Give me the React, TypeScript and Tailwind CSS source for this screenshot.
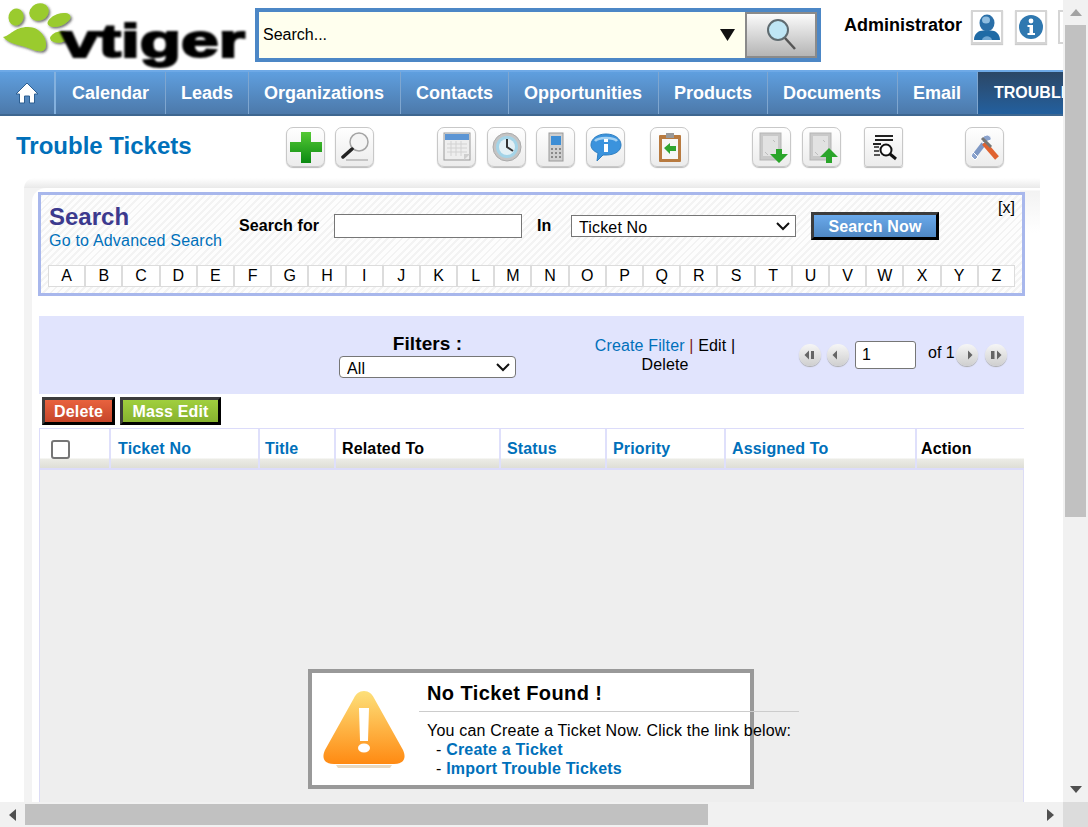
import type { ReactNode } from 'react';

const navItems = [
  { label: 'Calendar', width: 'w-[110px] pl-[16px]' },
  { label: 'Leads', width: 'w-[83px] pl-[15px]' },
  { label: 'Organizations', width: 'w-[152px] pl-[15px]' },
  { label: 'Contacts', width: 'w-[108px] pl-[15px]' },
  { label: 'Opportunities', width: 'w-[150px] pl-[15px]' },
  { label: 'Products', width: 'w-[109px] pl-[15px]' },
  { label: 'Documents', width: 'w-[130px] pl-[15px]' },
  { label: 'Email', width: 'w-[80px] pl-[15px]' },
];

const columns = [
  { label: '', width: 'w-[71px] pl-[6px]', link: false },
  { label: 'Ticket No', width: 'w-[149px] pl-[7px]', link: true },
  { label: 'Title', width: 'w-[76px] pl-[5px]', link: true },
  { label: 'Related To', width: 'w-[165px] pl-[6px]', link: false },
  { label: 'Status', width: 'w-[106px] pl-[6px]', link: true },
  { label: 'Priority', width: 'w-[119px] pl-[6px]', link: true },
  { label: 'Assigned To', width: 'w-[191px] pl-[6px]', link: true },
  { label: 'Action', width: 'w-[107px] pl-[4px]', link: false },
];

const letters = 'ABCDEFGHIJKLMNOPQRSTUVWXYZ'.split('');

function Logo() {
  return (
    <svg width="250" height="70" viewBox="0 0 250 70">
      <defs>
        <filter id="soft">
          <feGaussianBlur stdDeviation="0.8" />
        </filter>
        <filter id="paw" x="-20%" y="-20%" width="150%" height="150%">
          <feDropShadow dx="1.5" dy="1.5" stdDeviation="1" floodColor="#333" floodOpacity="0.7" />
        </filter>
      </defs>
      <g filter="url(#paw)" fill="#9acb2f">
        <ellipse cx="16" cy="17" rx="7.5" ry="8.5" transform="rotate(15 16 17)" />
        <ellipse cx="39" cy="12" rx="10" ry="8.5" transform="rotate(-25 39 12)" />
        <ellipse cx="59" cy="20" rx="12" ry="6" transform="rotate(-20 59 20)" />
        <ellipse cx="60" cy="37" rx="10" ry="5.5" transform="rotate(-10 60 37)" />
        <path d="M3 37 C10 36 14 27 28 27 C40 27 47 38 46 46 C45 53 38 52 31 49 C22 45 10 45 3 37 Z" />
      </g>
      <text x="61" y="57" textLength="184" lengthAdjust="spacingAndGlyphs" fontFamily="'Liberation Sans', sans-serif" fontWeight="700" fontSize="47" fill="#000" stroke="#000" strokeWidth="2" filter="url(#soft)">
        vtiger
      </text>
    </svg>
  );
}

function ToolButton({ children, className = '' }: { children: ReactNode; className?: string }) {
  return (
    <div className={`flex h-[40px] w-[39px] shrink-0 items-center justify-center rounded-[7px] border border-[#c8c8c8] bg-gradient-to-b from-white to-[#ececec] shadow-[0_1px_1px_#bbb] ${className}`}>
      <svg width="34" height="34" viewBox="0 0 34 34" className="blur-[0.35px]">
        {children}
      </svg>
    </div>
  );
}

function DocShape() {
  return (
    <>
      <rect x="5" y="3" width="21" height="27" fill="#c9c9c9" stroke="#b5b5b5" />
      <rect x="8" y="6" width="15" height="20" fill="#e2e2e2" />
      <path d="M10 22 L13 25 M18 10 L20 12" stroke="#bdbdbd" />
    </>
  );
}

function PagerButton({ dir, end }: { dir: 'left' | 'right'; end: boolean }) {
  const arrow = dir === 'left' ? 'M10 6.5 L10 15.5 L5.5 11 Z' : 'M12 6.5 L12 15.5 L16.5 11 Z';
  const stem = dir === 'left' ? 'M12 7 H15 V15 H12 Z' : 'M6 7 H9.5 V15 H6 Z';
  return (
    <div className="h-[22px] w-[22px] shrink-0 rounded-full bg-gradient-to-b from-[#f6f6f6] to-[#cfcfcf] shadow-[0_1px_1px_#aaa]">
      <svg width="22" height="22" viewBox="0 0 22 22">
        <path d={arrow} fill="#666" />
        {end && <path d={stem} fill="#666" />}
      </svg>
    </div>
  );
}

function ActionButton({ label, className }: { label: string; className: string }) {
  return (
    <button className={`h-[28px] border-[3px] border-t-[#3c3c3c] border-l-[#3c3c3c] border-r-black border-b-black text-[16px] font-bold tracking-[0.15px] text-white ${className}`}>
      {label}
    </button>
  );
}

function SelectBox({ value, className }: { value: string; className: string }) {
  return (
    <div className={`relative h-[22px] shrink-0 ${className}`}>
      <select defaultValue={value} className="h-full w-full appearance-none rounded-[inherit] border border-[#767676] bg-white pb-[2px] pl-[7px] tracking-[0.15px]">
        <option>{value}</option>
      </select>
      <svg width="14" height="9" viewBox="0 0 14 9" className="pointer-events-none absolute right-[6px] top-[7px]">
        <path d="M1 1 L7 7 L13 1" fill="none" stroke="#111" strokeWidth="2" />
      </svg>
    </div>
  );
}

export default function App() {
  return (
    <div className="flex h-[827px] w-[1088px] flex-col overflow-hidden bg-white font-['Liberation_Sans',sans-serif] text-[16px] text-black">
      <div className="flex h-[802px]">
        <div className="h-[802px] w-[1063px] overflow-hidden">
          <div className="w-[1200px]">
            {/* header */}
            <div className="flex h-[70px]">
              <div className="w-[255px] shrink-0">
                <Logo />
              </div>
              <div className="mt-[8px] flex h-[54px] w-[566px] shrink-0 border-4 border-[#4c87c6] bg-[#ffffee]">
                <div className="flex flex-1 items-center pl-[4px]">Search...</div>
                <div className="flex w-[25px] items-center">
                  <svg width="15" height="12" viewBox="0 0 15 12">
                    <path d="M0 0 H15 L7.5 12 Z" fill="#111" />
                  </svg>
                </div>
                <div className="flex w-[72px] items-center justify-center border-2 border-[#8a8a8a] bg-gradient-to-b from-[#fbfbfb] to-[#b5b5b5]">
                  <svg width="34" height="38" viewBox="0 0 34 38">
                    <circle cx="14" cy="14" r="10" fill="#bfe6f5" stroke="#5f6b70" strokeWidth="2" />
                    <path d="M21 22 L31 33" stroke="#555" strokeWidth="2.5" />
                  </svg>
                </div>
              </div>
              <div className="ml-[23px] mt-[15px] w-[118px] shrink-0 text-[18px] font-bold leading-[20px]">Administrator</div>
              <div className="ml-[9px] mt-[10px] flex h-[34px] w-[32px] shrink-0 items-center justify-center border-2 border-[#d5d5d5] shadow-[0_1px_1px_#ccc]">
                <svg width="28" height="28" viewBox="0 0 28 28" className="blur-[0.3px]">
                  <path d="M1 27 C1 19 8 16 14 18 C20 16 27 19 27 27 Z" fill="#1f6aa5" />
                  <path d="M9 27 C10 22 18 22 19 27 Z" fill="#6fa6d2" />
                  <ellipse cx="14" cy="10" rx="7.5" ry="8.5" fill="#2a6fa8" />
                  <ellipse cx="13" cy="7" rx="4" ry="3.5" fill="#8fbde0" />
                </svg>
              </div>
              <div className="ml-[12px] mt-[10px] flex h-[34px] w-[32px] shrink-0 items-center justify-center border-2 border-[#d5d5d5] shadow-[0_1px_1px_#ccc]">
                <svg width="26" height="26" viewBox="0 0 26 26" className="blur-[0.3px]">
                  <circle cx="13" cy="13" r="12" fill="#2f78b0" />
                  <circle cx="13" cy="7" r="2.4" fill="#fff" />
                  <path d="M9.5 11 H15 V19 H17 V21 H9.5 V19 H11.5 V13 H9.5 Z" fill="#fff" />
                </svg>
              </div>
              <div className="ml-[11px] mt-[10px] h-[34px] w-[33px] shrink-0 border-2 border-[#d5d5d5]" />
            </div>

            {/* module tabs */}
            <div className="flex h-[46px] border-t-2 border-b-2 border-t-[#6ea9e6] border-b-[#3e6790] bg-gradient-to-b from-[#5f9fdf] to-[#4c79aa] text-[18px] font-bold text-white">
              <div className="flex w-[56px] shrink-0 items-center justify-center border-r-2 border-r-[#84b1de]">
                <svg width="24" height="24" viewBox="0 0 24 24">
                  <path d="M12 2 L23 13 H19.5 V22 H14.5 V15 H9.5 V22 H4.5 V13 H1 Z" fill="#fff" stroke="#2d5f92" strokeWidth="1" />
                </svg>
              </div>
              {navItems.map((item) => (
                <div key={item.label} className={`flex shrink-0 items-center border-r border-r-[#7fa6cf] ${item.width}`}>
                  {item.label}
                </div>
              ))}
              <div className="flex w-[180px] shrink-0 items-center bg-gradient-to-b from-[#2b4766] to-[#22609f] pl-[16px] text-[16px]">TROUBLE TICKETS</div>
            </div>

            {/* title and toolbar */}
            <div className="flex h-[62px] items-start pt-[11px]">
              <div className="ml-[16px] w-[270px] shrink-0 text-[24px] font-bold leading-[38px] text-[#0070ba]">Trouble Tickets</div>
              <ToolButton>
                <defs>
                  <linearGradient id="plus" x1="0" y1="0" x2="0" y2="1">
                    <stop offset="0" stopColor="#55c935" />
                    <stop offset="1" stopColor="#0b8a12" />
                  </linearGradient>
                </defs>
                <path d="M12 2 H22 V12 H33 V22 H22 V33 H12 V22 H1 V12 H12 Z" fill="url(#plus)" />
              </ToolButton>
              <ToolButton className="ml-[10px]">
                <circle cx="21" cy="12" r="9" fill="#f4f4f4" stroke="#a5a5a5" strokeWidth="1.5" />
                <path d="M14 19 L5 27" stroke="#222" strokeWidth="3.5" strokeLinecap="round" />
                <path d="M8 30 H30" stroke="#c5c5c5" strokeWidth="2" />
              </ToolButton>
              <ToolButton className="ml-[63px]">
                <rect x="4" y="3" width="26" height="27" fill="#eee" stroke="#999" />
                <rect x="5" y="4" width="24" height="6" fill="#5c95d4" />
                <path d="M7 14 H27 M7 18 H27 M7 22 H27 M11 11 V26 M16 11 V26 M21 11 V26" stroke="#d2d2d2" />
                <path d="M30 24 L24 30 V24 Z" fill="#cfcfcf" />
              </ToolButton>
              <ToolButton className="ml-[11px]">
                <circle cx="17" cy="17" r="14" fill="#c4c4c4" stroke="#aaa" />
                <circle cx="17" cy="17" r="11" fill="#a4d4e8" />
                <circle cx="17" cy="17" r="8" fill="#e4f0f5" />
                <path d="M17 9 V17 L23 21" stroke="#333" strokeWidth="2" fill="none" />
              </ToolButton>
              <ToolButton className="ml-[10px]">
                <rect x="10" y="3" width="14" height="28" fill="#cfcfcf" stroke="#999" />
                <rect x="12" y="6" width="10" height="9" fill="#3d8ed6" />
                <path d="M12 19 H22 M12 23 H22 M12 27 H22" stroke="#888" strokeWidth="2" strokeDasharray="2 2" />
              </ToolButton>
              <ToolButton className="ml-[11px]">
                <path d="M17 4 C26 4 32 9 32 15 C32 21 26 25 17 25 L14 25 L8 31 L9 23 C4 21 2 18 2 15 C2 9 8 4 17 4 Z" fill="#3b93dd" stroke="#2d7dbf" />
                <path d="M6 11 C9 7 25 7 28 11" stroke="#a5d2f3" strokeWidth="2.5" fill="none" />
                <rect x="15" y="9" width="4" height="3" fill="#fff" />
                <rect x="15" y="14" width="4" height="8" fill="#fff" />
              </ToolButton>
              <ToolButton className="ml-[25px]">
                <rect x="6" y="5" width="22" height="27" rx="1" fill="#b87a3f" />
                <rect x="9" y="9" width="16" height="20" fill="#f6f6f6" />
                <rect x="13" y="3" width="8" height="5" fill="#999" />
                <path d="M11 18 L17 13 V16 H23 V21 H17 V24 Z" fill="#2fa52f" />
              </ToolButton>
              <ToolButton className="ml-[63px]">
                <DocShape />
                <path d="M21 19 H27 V24 H33 L24 33 L15 24 H21 Z" fill="#2aa52a" />
              </ToolButton>
              <ToolButton className="ml-[11px]">
                <DocShape />
                <path d="M24 18 L33 27 H27 V33 H21 V27 H15 Z" fill="#2aa52a" />
              </ToolButton>
              <ToolButton className="ml-[23px] !rounded-[3px]">
                <path d="M8 6 H26 M8 10 H26 M6 14 H14" stroke="#222" strokeWidth="2" fill="none" />
                <path d="M7 17 H12 M7 21 H12 M7 25 H13" stroke="#222" strokeWidth="1.5" />
                <circle cx="19" cy="20" r="5.5" fill="#fff" stroke="#111" strokeWidth="2" />
                <path d="M23 24 L29 29" stroke="#111" strokeWidth="3" />
              </ToolButton>
              <ToolButton className="ml-[62px]">
                <path d="M7 25 L17 12" stroke="#7d97c4" strokeWidth="5" />
                <path d="M15 7 C19 3 24 6 23 10 L14 13 Z" fill="#8aa2cc" stroke="#fff" />
                <path d="M5 22 L10 27 L7 30 L3 26 Z" fill="#8aa2cc" stroke="#fff" />
                <path d="M16 13 L29 28" stroke="#e0622f" strokeWidth="5" />
                <path d="M14 8 L23 17" stroke="#777" strokeWidth="3" />
              </ToolButton>
            </div>

            {/* content frame */}
            <div className="ml-[24px] w-[1016px] rounded-tl-[10px] bg-[linear-gradient(to_bottom,#ffffff_0,#e9e9e9_10px,#f3f3f3_10px)] pl-[8px] pt-[10px]">
              <div className="h-[614px] rounded-tl-[14px] bg-white bg-[linear-gradient(to_bottom,#ffffff_2px,#f3f3f3_3px,#ffffff_45px)] bg-[length:20px_100%] bg-right bg-no-repeat pt-[4px]">
                <div className="ml-[6px] h-[104px] w-[987px] border-[3px] border-[#a8b7ec] bg-[repeating-linear-gradient(135deg,#f3f3f3_0,#f3f3f3_2px,#fdfdfd_2px,#fdfdfd_5px)] pl-[7px] pt-[7px]">
                  <div className="flex h-[48px] items-center pr-[7px]">
                    <div className="w-[191px] shrink-0 pl-[1px] pt-[2px]">
                      <div className="text-[24px] font-bold leading-[28px] text-[#3c3a8e]">Search</div>
                      <div className="leading-[20px] tracking-[0.2px] text-[#0070ba]">Go to Advanced Search</div>
                    </div>
                    <div className="w-[80px] shrink-0 whitespace-nowrap font-bold tracking-[0.1px]">Search for</div>
                    <input className="ml-[15px] h-[24px] w-[188px] border border-[#767676] bg-white" />
                    <div className="ml-[15px] w-[15px] shrink-0 font-bold">In</div>
                    <SelectBox value="Ticket No" className="ml-[19px] w-[225px]" />
                    <ActionButton label="Search Now" className="ml-[15px] w-[128px] bg-gradient-to-b from-[#6aa9ea] to-[#4f88c4]" />
                    <div className="ml-auto mt-[-4px] self-start leading-[20px]">[x]</div>
                  </div>
                  <div className="mt-[15px] grid h-[22px] w-[967px] grid-cols-[repeat(26,minmax(0,1fr))] bg-white">
                    {letters.map((l) => (
                      <div key={l} className="flex h-[22px] items-center justify-center border border-[#dcdcdc] leading-[20px]">{l}</div>
                    ))}
                  </div>
                </div>

                <div className="ml-[7px] mt-[20px] flex h-[78px] w-[985px] bg-[#e1e4fd]">
                  <div className="ml-[300px] flex w-[177px] shrink-0 flex-col items-center pt-[18px]">
                    <div className="text-[19px] font-bold leading-[20px] tracking-[0.1px]">Filters :</div>
                    <SelectBox value="All" className="mt-[2px] w-[177px] rounded-[4px]" />
                  </div>
                  <div className="ml-[59px] w-[180px] shrink-0 pt-[20px] text-center leading-[19px] tracking-[0.15px]">
                    <span className="text-[#0070ba]">Create Filter</span> <span className="text-[#7a1c1c]">|</span> Edit |<br />Delete
                  </div>
                  <div className="ml-[44px] flex items-center">
                    <PagerButton dir="left" end />
                    <div className="ml-[6px]"><PagerButton dir="left" end={false} /></div>
                    <input defaultValue="1" className="ml-[6px] h-[28px] w-[61px] rounded-[3px] border border-[#767676] bg-white pl-[6px]" />
                    <div className="ml-[12px] mt-[-4px] w-[28px] shrink-0">of 1</div>
                    <PagerButton dir="right" end={false} />
                    <div className="ml-[7px]"><PagerButton dir="right" end /></div>
                  </div>
                </div>

                <div className="ml-[10px] mt-[3px] flex gap-[5px]">
                  <ActionButton label="Delete" className="w-[73px] bg-gradient-to-b from-[#e8623e] to-[#c6452a]" />
                  <ActionButton label="Mass Edit" className="w-[101px] bg-gradient-to-b from-[#a0cf3e] to-[#86b22f]" />
                </div>

                <div className="ml-[7px] mt-[3px] w-[985px]">
                  <div className="flex h-[42px] border-x border-t border-b-2 border-[#dcdcfa] font-bold tracking-[0.15px]">
                    {columns.map((col, i) => (
                      <div key={i} className={`flex h-full shrink-0 items-start border-r-2 border-r-[#dfe0fb] bg-[linear-gradient(to_bottom,#ffffff_29px,#ecece6_30px,#deded6_39px)] pt-[10px] leading-[20px] last:border-r-0 ${col.width} ${col.link ? 'text-[#0070ba]' : ''}`}>
                        {col.label}
                        {i === 0 && <input type="checkbox" className="ml-[5px] mt-[1px] h-[19px] w-[19px] appearance-none rounded-[3px] border-2 border-[#767676] bg-white" />}
                      </div>
                    ))}
                  </div>
                  <div className="h-[332px] border-x border-[#dcdcf5] bg-[#eeeeee] pl-[268px] pt-[199px]">
                    <div className="flex h-[120px] w-[446px] border-4 border-[#999999] bg-white">
                      <div className="flex w-[107px] shrink-0 items-start pl-[8px] pt-[15px]">
                        <svg width="88" height="82" viewBox="0 0 88 82" className="blur-[0.4px]">
                          <defs>
                            <linearGradient id="warn" x1="0" y1="0" x2="0" y2="1">
                              <stop offset="0" stopColor="#fde07a" />
                              <stop offset="1" stopColor="#ff8a12" />
                            </linearGradient>
                          </defs>
                          <path d="M16 77 H72 L70 80 H18 Z" fill="#e9d9c0" />
                          <path d="M44 3 C49 3 52 6 54 10 L83 62 C87 71 83 76 74 76 L14 76 C5 76 1 71 5 62 L34 10 C36 6 39 3 44 3 Z" fill="url(#warn)" />
                          <path d="M39 20 H49 L48 53 H40 Z" fill="#fff" />
                          <ellipse cx="44" cy="60" rx="6" ry="4.5" fill="#fff" />
                        </svg>
                      </div>
                      <div className="w-[380px] shrink-0">
                        <div className="h-[39px] border-b border-[#cccccc] pl-[8px] pt-[8px] text-[20px] font-bold leading-[24px] tracking-[0.4px]">No Ticket Found !</div>
                        <div className="whitespace-nowrap pl-[8px] pt-[9px] leading-[19px] tracking-[0.2px]">
                          <div>You can Create a Ticket Now. Click the link below:</div>
                          <div className="pl-[9px]">- <span className="font-bold text-[#0070ba]">Create a Ticket</span></div>
                          <div className="pl-[9px]">- <span className="font-bold text-[#0070ba]">Import Trouble Tickets</span></div>
                        </div>
                      </div>
                    </div>
                  </div>
                </div>
              </div>
            </div>
          </div>
        </div>

        {/* vertical scrollbar */}
        <div className="flex h-[802px] w-[25px] shrink-0 flex-col items-center bg-[#f1f1f1]">
          <div className="flex h-[25px] w-full items-center justify-center">
            <svg width="12" height="7" viewBox="0 0 12 7"><path d="M6 0 L12 7 H0 Z" fill="#a3a3a3" /></svg>
          </div>
          <div className="h-[492px] w-[21px] bg-[#c1c1c1]" />
          <div className="mt-auto flex h-[25px] w-full items-center justify-center">
            <svg width="12" height="7" viewBox="0 0 12 7"><path d="M0 0 H12 L6 7 Z" fill="#505050" /></svg>
          </div>
        </div>
      </div>

      {/* horizontal scrollbar */}
      <div className="flex h-[25px] w-[1088px] items-center bg-[#f1f1f1]">
        <div className="flex h-[25px] w-[25px] shrink-0 items-center justify-center">
          <svg width="7" height="12" viewBox="0 0 7 12"><path d="M7 0 V12 L0 6 Z" fill="#505050" /></svg>
        </div>
        <div className="h-[21px] w-[683px] shrink-0 bg-[#c1c1c1]" />
        <div className="ml-auto flex h-[25px] w-[50px] shrink-0 items-center">
          <div className="flex h-[25px] w-[25px] items-center justify-center">
            <svg width="7" height="12" viewBox="0 0 7 12"><path d="M0 0 L7 6 L0 12 Z" fill="#505050" /></svg>
          </div>
          <div className="h-[25px] w-[25px] bg-[#dcdcdc]" />
        </div>
      </div>
    </div>
  );
}
